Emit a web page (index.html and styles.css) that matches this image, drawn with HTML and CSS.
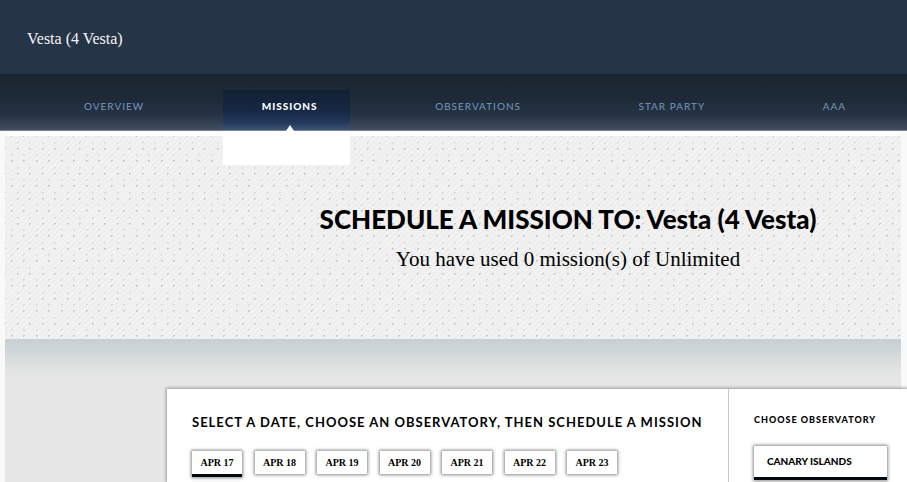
FILE: index.html
```html
<!DOCTYPE html>
<html lang="en">
<head>
<meta charset="utf-8">
<title>Schedule a mission</title>
<link rel="stylesheet" href="styles.css">
</head>
<body>
<header class="masthead">Vesta (4 Vesta)</header>
<nav class="nav">
  <a class="nav-link" href="#">OVERVIEW</a>
  <a class="nav-link current" href="#">MISSIONS</a>
  <a class="nav-link" href="#">OBSERVATIONS</a>
  <a class="nav-link" href="#">STAR PARTY</a>
  <a class="nav-link" href="#">AAA</a>
</nav>
<main class="page">
  <section class="hero">
    <h1 class="hero-title">SCHEDULE A MISSION TO: Vesta (4 Vesta)</h1>
    <p class="hero-text">You have used 0 mission(s) of Unlimited</p>
  </section>
  <section class="content">
    <div class="card">
      <div class="schedule">
        <h2 class="schedule-title">SELECT A DATE, CHOOSE AN OBSERVATORY, THEN SCHEDULE A MISSION</h2>
        <div class="dates">
          <button class="date selected">APR 17</button>
          <button class="date">APR 18</button>
          <button class="date">APR 19</button>
          <button class="date">APR 20</button>
          <button class="date">APR 21</button>
          <button class="date">APR 22</button>
          <button class="date">APR 23</button>
        </div>
      </div>
      <aside class="observatories">
        <h3 class="observatories-title">CHOOSE OBSERVATORY</h3>
        <button class="observatory selected">CANARY ISLANDS</button>
      </aside>
    </div>
  </section>
</main>
</body>
</html>
```
FILE: styles.css
```css
* { box-sizing: border-box; }
body {
  margin: 0;
  min-height: 100vh;
  display: flex;
  flex-direction: column;
  overflow: hidden;
  background: #f9f9f9;
  color: #000;
  font-family: Lato, sans-serif;
}
h1, h2, h3, p { margin: 0; }
.masthead {
  padding: 29px 27px 25px;
  background: #263447;
  color: #f4f5f7;
  font: 16px/20px "Liberation Serif", serif;
}
.nav {
  display: flex;
  justify-content: space-between;
  padding: 16px 29px 0 45px;
  background: linear-gradient(#1b2530, #1e2a38 45%, #263445 75%, #414e60);
  border-bottom: 1px solid #7c8492;
}
.nav-link {
  position: relative;
  padding: 0 32px 0 39px;
  color: #7896bd;
  font-size: 10px;
  line-height: 32px;
  height: 40px;
  letter-spacing: 1px;
  text-decoration: none;
  white-space: nowrap;
}
.nav-link.current {
  background: linear-gradient(#122033, #162743 50%, #22375a 80%, #3b5475);
  color: #fff;
  font-weight: 900;
}
.nav-link.current::before {
  content: "";
  position: absolute;
  bottom: -1px;
  left: 50%;
  border: 4px solid transparent;
  border-top: 0;
  border-bottom: 6px solid #fff;
}
.nav-link.current::after {
  content: "";
  position: absolute;
  top: 41px;
  left: 0;
  right: 0;
  height: 34px;
  background: #fff;
}
.page {
  flex: 1;
  display: flex;
  flex-direction: column;
  margin: 0 6px 0 5px;
}
.hero {
  --dot: radial-gradient(#c8c8c8 1px, transparent 1px);
  --soft: radial-gradient(#dcdcdc 1px, transparent 1px);
  padding: 68px 0 65px 230px;
  border-top: 5px solid #fcfcfc;
  background:
    var(--dot) 0 0 / 25px 25px,
    var(--dot) 12px 0 / 25px 25px,
    var(--dot) 6px 12px / 25px 25px,
    var(--dot) 19px 12px / 25px 25px,
    var(--soft) 6px 6px / 25px 25px,
    var(--soft) 19px 6px / 25px 25px,
    var(--soft) 0 19px / 25px 25px,
    var(--soft) 12px 19px / 25px 25px,
    repeating-linear-gradient(135deg, #eeeeee 0 2px, #f2f2f2 2px 4px);
  text-align: center;
  white-space: nowrap;
}
.hero-title {
  font-size: 26px;
  line-height: 30px;
  font-weight: 900;
}
.hero-text {
  margin-top: 10px;
  font: 21px/30px "Liberation Serif", serif;
}
.content {
  flex: 1;
  display: flex;
  padding: 50px 0 0 162px;
  background: linear-gradient(#c5cfd4, #d2d8da 15px, #e0e1e1 28px, #e6e6e6 40px);
}
.card {
  flex: 1;
  display: flex;
  margin-right: -6px;
  background: #fff;
  box-shadow: 0 0 3px 1px #999;
  white-space: nowrap;
}
.schedule {
  flex: 0 0 562px;
  min-width: 0;
  padding: 24px 25px 0;
  border-right: 1px solid #c5c9d1;
}
.schedule-title {
  font-size: 13px;
  line-height: 18px;
  font-weight: 700;
  letter-spacing: 1px;
}
.dates {
  display: flex;
  justify-content: space-between;
  align-items: flex-start;
  max-width: 425px;
  margin-top: 20px;
}
.date, .observatory {
  border: 0;
  border-bottom: 0 solid #000810;
  background: #fff;
  box-shadow: 0 0 3px 1px #888;
  color: #000;
}
.date {
  width: 50px;
  height: 23px;
  padding: 0;
  font: bold 10px/22px "Liberation Serif", serif;
}
.selected { border-bottom-width: 3px; }
.date.selected { height: 26px; }
.observatories { padding: 23px 20px 0 25px; flex: 1; }
.observatories-title {
  font-size: 9px;
  line-height: 16px;
  font-weight: 900;
  letter-spacing: 1px;
}
.observatory {
  width: 100%;
  height: 34px;
  margin-top: 18px;
  padding: 0 13px;
  text-align: left;
  font: 900 10px/31px Lato, sans-serif;
}
```
